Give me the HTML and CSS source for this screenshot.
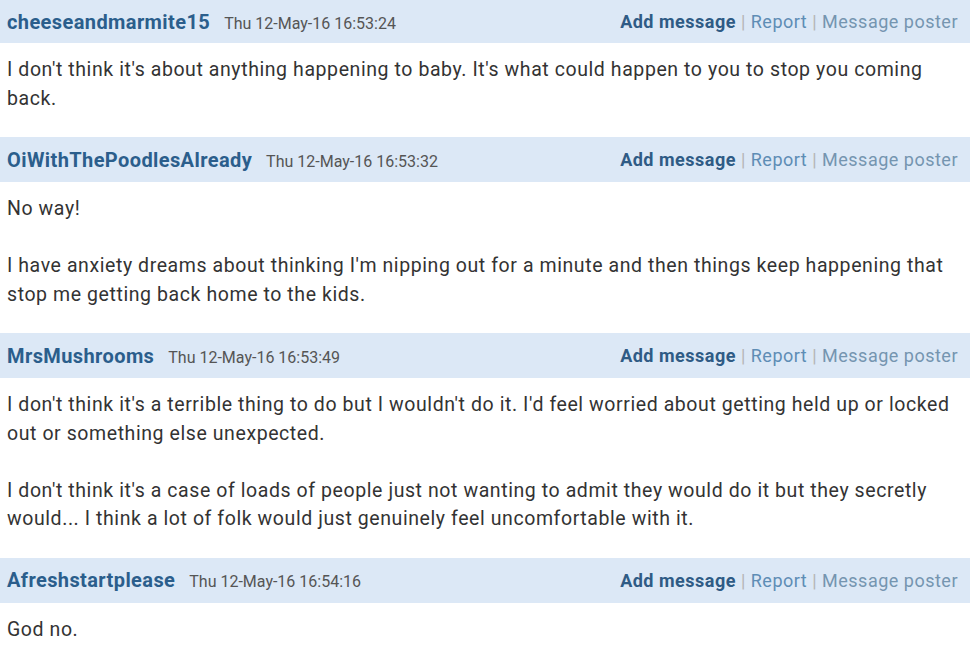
FILE: index.html
```html
<!DOCTYPE html>
<html lang="en">
<head>
    <meta charset="UTF-8">
    <title>Thread</title>
    <link rel="stylesheet" href="styles.css">
</head>
<body>
    <div class="thread">
        <div class="post">
            <div class="post-head">
                <div class="who">
                    <span class="poster">cheeseandmarmite15</span>
                    <span class="date">Thu 12-May-16 16:53:24</span>
                </div>
                <div class="actions">
                    <a class="add" href="#">Add message</a> <span class="sep">|</span> <a class="report" href="#">Report</a> <span class="sep">|</span> <a class="mp" href="#">Message poster</a>
                </div>
            </div>
            <div class="post-body">
                I don't think it's about anything happening to baby. It's what could happen to you to stop you coming back.
            </div>
        </div>
        <div class="post">
            <div class="post-head">
                <div class="who">
                    <span class="poster">OiWithThePoodlesAlready</span>
                    <span class="date">Thu 12-May-16 16:53:32</span>
                </div>
                <div class="actions">
                    <a class="add" href="#">Add message</a> <span class="sep">|</span> <a class="report" href="#">Report</a> <span class="sep">|</span> <a class="mp" href="#">Message poster</a>
                </div>
            </div>
            <div class="post-body">
                No way!<br><br>I have anxiety dreams about thinking I'm nipping out for a minute and then things keep happening that stop me getting back home to the kids.
            </div>
        </div>
        <div class="post">
            <div class="post-head">
                <div class="who">
                    <span class="poster">MrsMushrooms</span>
                    <span class="date">Thu 12-May-16 16:53:49</span>
                </div>
                <div class="actions">
                    <a class="add" href="#">Add message</a> <span class="sep">|</span> <a class="report" href="#">Report</a> <span class="sep">|</span> <a class="mp" href="#">Message poster</a>
                </div>
            </div>
            <div class="post-body">
                I don't think it's a terrible thing to do but I wouldn't do it. I'd feel worried about getting held up or locked out or something else unexpected.<br><br>I don't think it's a case of loads of people just not wanting to admit they would do it but they secretly would... I think a lot of folk would just genuinely feel uncomfortable with it.
            </div>
        </div>
        <div class="post">
            <div class="post-head">
                <div class="who">
                    <span class="poster">Afreshstartplease</span>
                    <span class="date">Thu 12-May-16 16:54:16</span>
                </div>
                <div class="actions">
                    <a class="add" href="#">Add message</a> <span class="sep">|</span> <a class="report" href="#">Report</a> <span class="sep">|</span> <a class="mp" href="#">Message poster</a>
                </div>
            </div>
            <div class="post-body">
                God no.
            </div>
        </div>
    </div>
</body>
</html>
```

FILE: styles.css
```css
body {
    margin: 0;
    background-color: #fff;
    font-family: Roboto, "Liberation Sans", sans-serif;
    color: #333;
}
.thread {
    display: flex;
    flex-direction: column;
}
.post-head {
    display: flex;
    justify-content: space-between;
    align-items: center;
    height: 45px;
    padding: 0 12px 0 7px;
    background-color: #dce8f6;
}
.post:first-child .post-head {
    height: 43px;
}
.who {
    display: flex;
    align-items: baseline;
    gap: 14px;
}
.poster {
    font-size: 20px;
    font-weight: bold;
    letter-spacing: 0.4px;
    color: #2b5e8c;
}
.date {
    font-size: 16px;
    color: #555;
}
.actions {
    font-size: 18px;
    letter-spacing: 0.5px;
    color: #b5b5b5;
}
.actions a {
    text-decoration: none;
}
.add {
    font-weight: bold;
    color: #2f5b85;
}
.report {
    color: #5e8db5;
}
.mp {
    color: #7595b0;
}
.post-body {
    padding: 13px 7px 24px;
    font-size: 19.5px;
    letter-spacing: 0.58px;
    line-height: 28.5px;
    color: #333;
}
```
